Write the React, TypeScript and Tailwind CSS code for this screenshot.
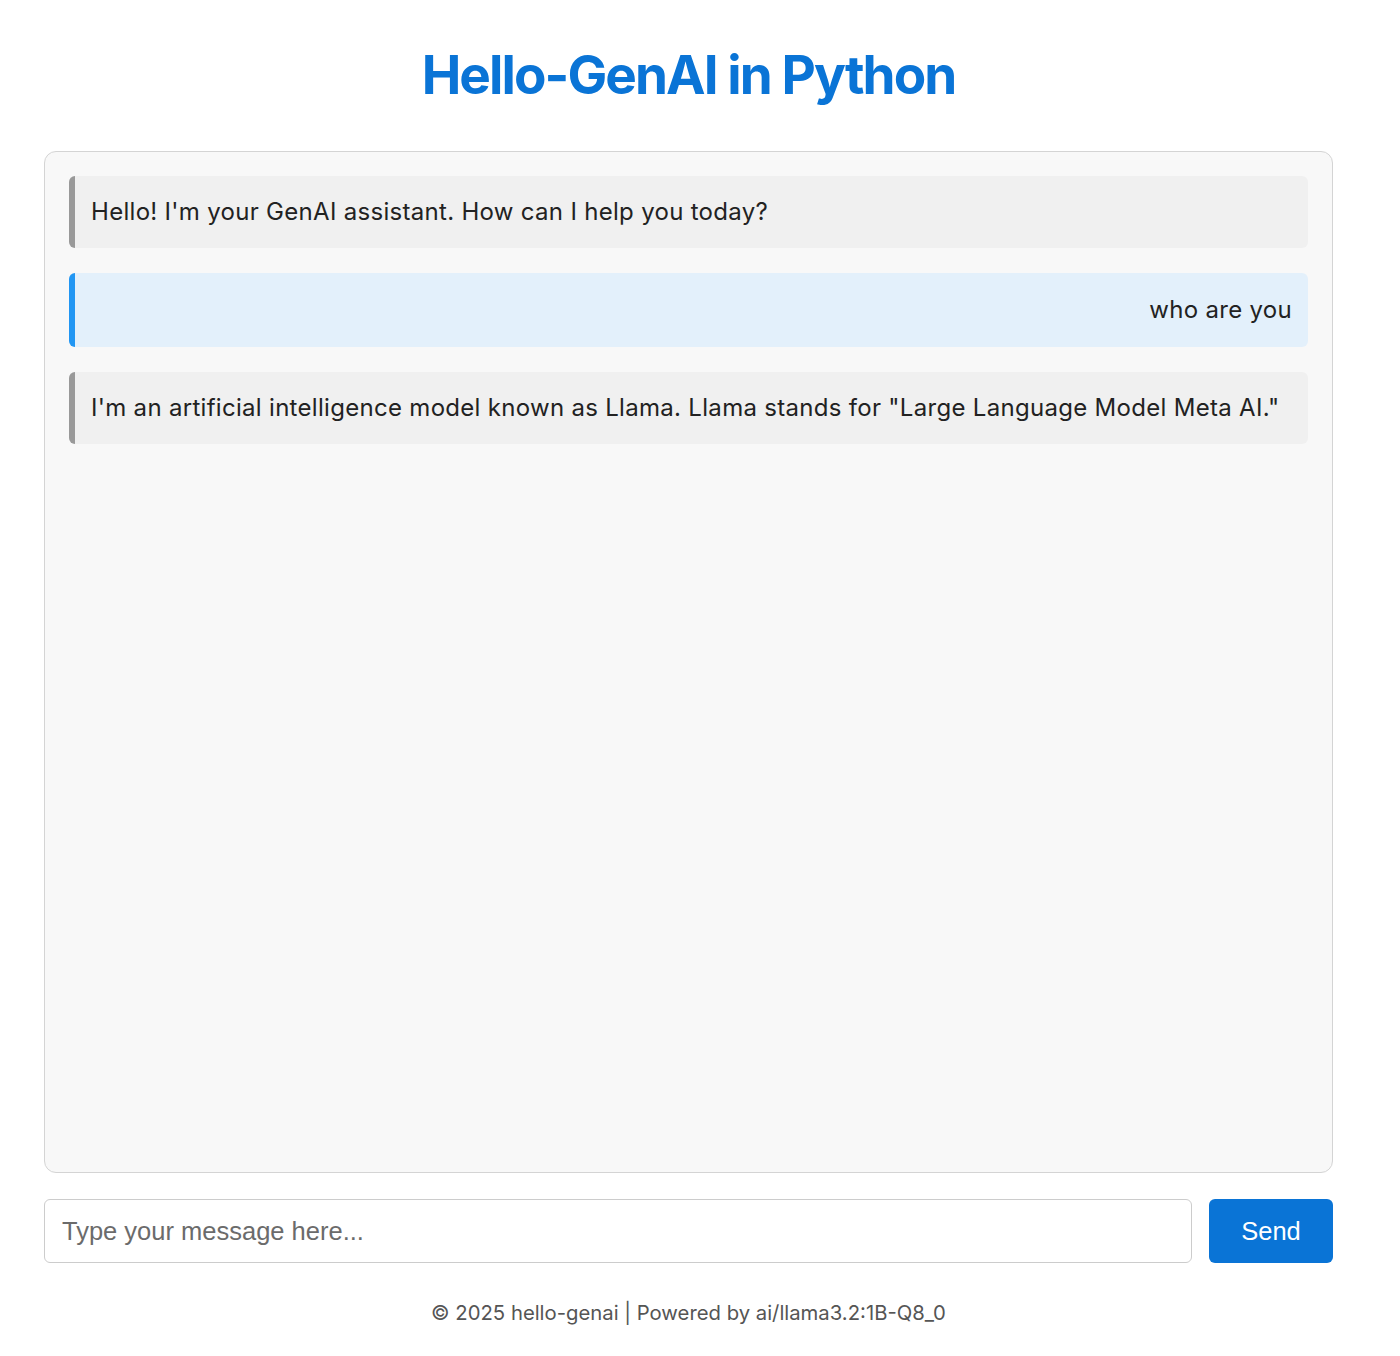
const messages = [
  { role: 'bot', text: "Hello! I'm your GenAI assistant. How can I help you today?" },
  { role: 'user', text: 'who are you' },
  {
    role: 'bot',
    text: 'I\'m an artificial intelligence model known as Llama. Llama stands for "Large Language Model Meta AI."',
  },
];

const App = () => {
  return (
    <div className="min-h-[1356px] bg-white">
      <div className="w-[1377px] px-[44px] pt-[42px]">
        <h1 className="text-center font-['Inter',sans-serif] text-[53px] font-bold leading-[67px] tracking-[-1.9px] text-[#0a74d6]">
          Hello-GenAI in Python
        </h1>

        <div className="mt-[42px] h-[1022px] rounded-[12px] border border-[#d4d4d4] bg-[#f8f8f8] p-[24px] font-['Inter',sans-serif] text-[24px] leading-[36px] tracking-[0.3px] text-[#222]">
          <div className="flex flex-col gap-[25px]">
            {messages.map((m, i) =>
              m.role === 'user' ? (
                <div
                  key={i}
                  className="rounded-[6px] border-l-[6px] border-[#2196f3] bg-[#e3f0fb] px-[16px] py-[19px] text-right"
                >
                  {m.text}
                </div>
              ) : (
                <div
                  key={i}
                  className="rounded-[6px] border-l-[6px] border-[#999999] bg-[#f0f0f0] px-[16px] py-[18px]"
                >
                  {m.text}
                </div>
              )
            )}
          </div>
        </div>

        <div className="mt-[26px] flex gap-[17px] font-['Liberation_Sans',Arial,sans-serif]">
          <input
            type="text"
            placeholder="Type your message here..."
            className="h-[64px] flex-1 rounded-[6px] border border-[#cccccc] bg-white px-[17px] text-[25.5px] text-[#222] outline-none placeholder:text-[#6b6b6b]"
          />
          <button className="h-[64px] w-[124px] rounded-[6px] bg-[#0a74d6] text-[25.5px] text-white">
            Send
          </button>
        </div>

        <p className="mt-[34px] text-center font-['Inter',sans-serif] text-[20.3px] leading-[31px] text-[#555555]">
          © 2025 hello-genai | Powered by ai/llama3.2:1B-Q8_0
        </p>
      </div>
    </div>
  );
};

export default App;
